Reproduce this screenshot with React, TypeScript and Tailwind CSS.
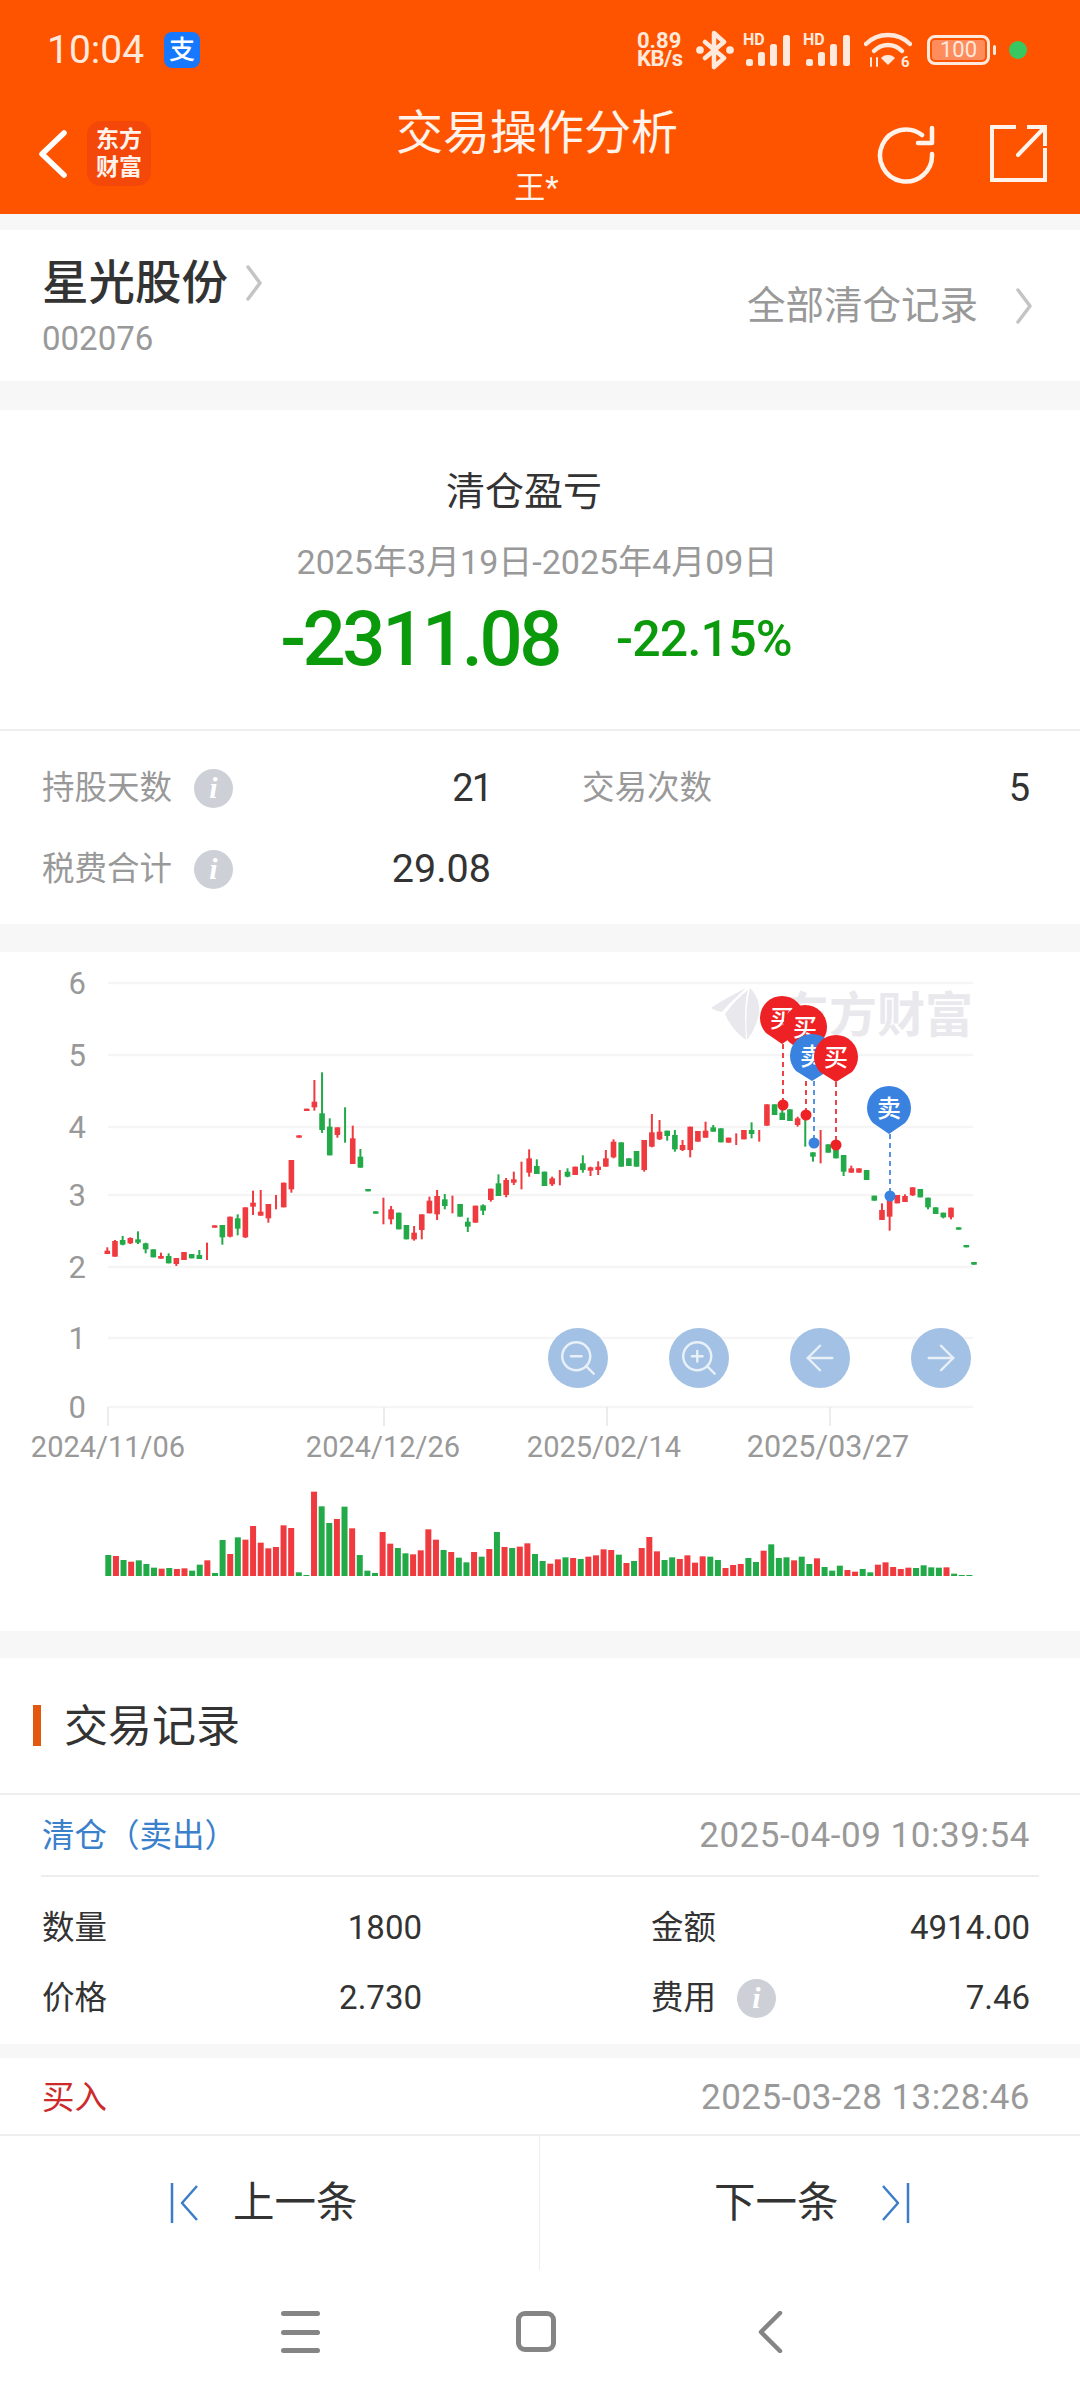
import { ArrowLeft, ArrowRight, ZoomIn, ZoomOut } from 'lucide-react';

type Candle = ['r' | 'g', number, number, number, number];

const RED = '#ef3a3f';
const GREEN = '#22a948';

// [colour, wick top, wick bottom, body top, body bottom], in thirds of a pixel
const firstCandles: Candle[] = [
  ['r', 262, 282, 272, 282],
  ['r', 240, 290, 243, 290],
  ['g', 228, 256, 240, 254],
  ['r', 232, 252, 234, 250],
  ['g', 214, 252, 238, 248],
  ['g', 248, 280, 250, 268],
  ['g', 268, 292, 268, 292],
  ['r', 278, 296, 288, 296],
  ['g', 280, 310, 288, 310],
  ['r', 294, 318, 294, 312],
  ['r', 276, 300, 276, 300],
  ['g', 282, 295, 282, 295],
  ['g', 270, 297, 285, 297],
  ['r', 248, 300, 0, 0],
  ['r', 196, 203, 196, 203],
  ['g', 195, 254, 195, 232],
  ['r', 170, 232, 170, 230],
  ['g', 163, 226, 175, 206],
  ['r', 142, 234, 142, 232],
  ['r', 92, 165, 128, 140],
  ['r', 90, 167, 155, 167],
  ['r', 132, 188, 132, 175],
  ['r', 105, 148, 0, 0],
  ['r', 68, 142, 68, 142],
];

const restCandles: Candle[] = [
  ['r', 630, 728, 630, 718],
  ['r', 556, 563, 556, 563],
  ['r', 476, 483, 476, 483],
  ['r', 390, 482, 455, 472],
  ['g', 367, 549, 490, 540],
  ['g', 505, 616, 530, 616],
  ['r', 532, 563, 532, 555],
  ['g', 472, 578, 0, 0],
  ['r', 527, 642, 565, 642],
  ['g', 597, 653, 620, 653],
  ['g', 717, 724, 717, 724],
  ['g', 784, 791, 784, 791],
  ['r', 743, 823, 0, 0],
  ['r', 768, 823, 778, 808],
  ['g', 788, 838, 788, 838],
  ['g', 825, 868, 825, 868],
  ['r', 828, 872, 848, 868],
  ['r', 793, 868, 793, 840],
  ['r', 740, 790, 752, 790],
  ['r', 720, 810, 738, 793],
  ['g', 732, 778, 748, 768],
  ['r', 737, 790, 0, 0],
  ['g', 762, 800, 762, 800],
  ['g', 803, 846, 815, 830],
  ['r', 767, 818, 767, 818],
  ['g', 763, 795, 766, 782],
  ['r', 716, 755, 716, 750],
  ['g', 673, 738, 700, 738],
  ['r', 684, 742, 690, 735],
  ['r', 665, 705, 688, 698],
  ['r', 635, 718, 0, 0],
  ['r', 598, 680, 625, 668],
  ['g', 628, 672, 648, 672],
  ['g', 665, 708, 665, 708],
  ['r', 680, 708, 685, 703],
  ['r', 660, 706, 0, 0],
  ['g', 655, 682, 665, 680],
  ['r', 650, 675, 650, 675],
  ['g', 616, 668, 640, 660],
  ['r', 650, 678, 652, 662],
  ['r', 634, 675, 650, 660],
  ['r', 600, 650, 625, 650],
  ['r', 568, 625, 575, 622],
  ['g', 577, 650, 577, 650],
  ['g', 625, 648, 625, 648],
  ['g', 603, 650, 603, 650],
  ['r', 570, 665, 570, 660],
  ['r', 492, 592, 547, 590],
  ['r', 510, 570, 545, 568],
  ['g', 542, 572, 542, 558],
  ['g', 540, 605, 555, 598],
  ['r', 570, 603, 585, 600],
  ['r', 530, 622, 530, 600],
  ['r', 543, 575, 543, 575],
  ['r', 515, 563, 542, 563],
  ['g', 525, 545, 532, 545],
  ['g', 535, 577, 535, 577],
  ['r', 563, 578, 563, 578],
  ['r', 550, 585, 0, 0],
  ['r', 540, 568, 540, 568],
  ['g', 517, 565, 540, 552],
  ['r', 540, 575, 0, 0],
  ['r', 463, 527, 463, 527],
  ['g', 463, 495, 463, 495],
  ['g', 475, 510, 488, 510],
  ['g', 478, 513, 478, 513],
  ['r', 500, 530, 505, 525],
  ['g', 495, 590, 0, 0],
  ['g', 607, 635, 607, 620],
  ['r', 540, 640, 0, 0],
  ['g', 583, 608, 583, 608],
  ['g', 598, 625, 598, 625],
  ['g', 615, 678, 615, 665],
  ['r', 647, 668, 655, 668],
  ['r', 655, 668, 655, 668],
  ['g', 660, 690, 660, 690],
  ['g', 737, 752, 737, 752],
  ['r', 760, 810, 780, 810],
  ['r', 750, 842, 750, 800],
  ['r', 735, 760, 735, 760],
  ['r', 733, 756, 738, 756],
  ['r', 712, 738, 712, 736],
  ['g', 717, 742, 717, 742],
  ['g', 743, 778, 743, 772],
  ['g', 772, 792, 772, 792],
  ['g', 788, 805, 788, 802],
  ['r', 773, 808, 773, 802],
  ['g', 832, 839, 832, 839],
  ['g', 885, 892, 885, 892],
  ['g', 936, 944, 936, 944],
];

const candles: Candle[] = [
  ...firstCandles.map(([c, a, b, d, e]): Candle => [c, a + 630, b + 630, d ? d + 630 : 0, e ? e + 630 : 0]),
  ...restCandles,
];

const volumeColors =
  'grgrgggrgr' + 'rggrggrgrr' + 'rrrrrggrgg' + 'rgrgggrrgg' + 'rrrrgrggrg' + 'rgrgrrggrr' + 'grgrrrrgrg' + 'rrrggrrrrg' + 'grrrggrggg' + 'rggrgggrrg' + 'grrrrrgggg' + 'rggg';

const volumeTops = [
  285, 288, 300, 305, 301, 312, 323, 326, 324, 327, 325, 332, 314, 301, 339, 240, 282, 232, 239, 198, 248, 265, 261, 196, 204, 337, 345, 95, 139, 189, 177, 140, 205, 285, 332, 339, 216, 251, 264, 280, 283, 271, 208, 239, 270, 276, 293, 307, 276, 290, 267, 216, 261, 264, 260, 250, 282, 303, 311, 298, 292, 294, 297, 290, 286, 268, 270, 284, 309, 303, 264, 231, 274, 300, 292, 297, 286, 308, 289, 290, 300, 324, 315, 312, 294, 306, 272, 253, 294, 292, 301, 290, 312, 295, 321, 332, 317, 330, 335, 327, 337, 314, 307, 321, 327, 323, 324, 316, 322, 323, 322, 341, 345, 345,
];

const grid: [string, number][] = [
  ['6', 31],
  ['5', 103],
  ['4', 175],
  ['3', 243],
  ['2', 315],
  ['1', 386],
  ['0', 455],
];

// label, tick position, label position, font size
const dates: [string, number, number, number][] = [
  ['2024/11/06', 108, 108, 29],
  ['2024/12/26', 384, 383, 29],
  ['2025/02/14', 607, 604, 29],
  ['2025/03/27', 830, 828, 30.5],
];

const pins: { x: number; y: number; tip: number; dot: number; dotX: number; label: string; color: string }[] = [
  { x: 782, y: 66, tip: 92, dot: 153, dotX: 783, label: '买', color: '#ee2225' },
  { x: 805, y: 75, tip: 102, dot: 163, dotX: 806, label: '买', color: '#ee2225' },
  { x: 812, y: 104, tip: 129, dot: 191, dotX: 814, label: '卖', color: '#3a82e0' },
  { x: 836, y: 105, tip: 130, dot: 193, dotX: 836, label: '买', color: '#ee2225' },
  { x: 889, y: 156, tip: 182, dot: 244, dotX: 890, label: '卖', color: '#3a82e0' },
];

function InfoDot() {
  return (
    <span className="flex h-[39px] w-[39px] shrink-0 items-center justify-center rounded-full bg-[#cdd1d7] font-['Liberation_Serif',serif] text-[30px] leading-none font-bold text-white italic">
      i
    </span>
  );
}

function SignalBars({ className }: { className: string }) {
  return (
    <svg className={className} width="50" height="34" viewBox="0 0 50 34" fill="#ffe9dc">
      <text x="0" y="12" fontSize="16" fontWeight="700">
        HD
      </text>
      <rect x="3" y="26" width="7" height="7" rx="2.5" />
      <rect x="15" y="19" width="7" height="14" rx="2.5" />
      <rect x="27" y="11" width="7" height="22" rx="2.5" />
      <rect x="40" y="2" width="7" height="31" rx="2.5" />
    </svg>
  );
}

function StatusBar() {
  return (
    <div className="flex h-[100px] items-center pr-[53px] pl-[47px] text-[#ffe9dc]">
      <span className="text-[39px] leading-none">10:04</span>
      <span className="ml-[20px] flex h-[36px] w-[36px] items-center justify-center rounded-[8px] bg-[#1677ff] text-[26px] leading-none font-medium text-white">
        支
      </span>
      <div className="ml-auto flex items-center">
        <div className="flex w-[50px] flex-col text-[22px] leading-[18px] font-bold">
          <span>0.89</span>
          <span className="tracking-[-0.5px]">KB/s</span>
        </div>
        <svg className="ml-[9px]" width="38" height="40" viewBox="0 0 38 40" fill="none" stroke="#ffe9dc" strokeWidth="4.5" strokeLinecap="round" strokeLinejoin="round">
          <path d="M9 12 28 28 18 37V3L28 12 9 28" />
          <circle cx="4" cy="20" r="1.6" fill="#ffe9dc" />
          <circle cx="34" cy="20" r="1.6" fill="#ffe9dc" />
        </svg>
        <SignalBars className="ml-[9px]" />
        <SignalBars className="ml-[10px]" />
        <svg className="ml-[11px]" width="48" height="36" viewBox="0 0 48 36" fill="none" stroke="#ffe9dc" strokeLinecap="round">
          <path d="M2 12C14 0 34 0 46 12" strokeWidth="4.5" />
          <path d="M10 19C18 11 30 11 38 19" strokeWidth="4.5" />
          <path d="M18 26C21 23 27 23 30 26L24 32Z" fill="#ffe9dc" strokeWidth="1.5" />
          <path d="M7 26V34M13 26V34" strokeWidth="2" />
          <text x="37" y="35" fontSize="15" fontWeight="700" fill="#ffe9dc" stroke="none">
            6
          </text>
        </svg>
        <div className="ml-[15px] flex items-center">
          <span className="flex h-[30px] w-[63px] items-center justify-center rounded-[8px] border-[3px] border-[#ffe9dc] p-[2px]">
            <span className="flex h-full w-full items-center justify-center rounded-[3px] bg-[#ff8c5c] text-[22px] leading-none">100</span>
          </span>
          <span className="ml-[3px] h-[10px] w-[3px] rounded-full bg-[#ffe9dc]" />
        </div>
        <span className="ml-[13px] h-[18px] w-[18px] rounded-full bg-[#39c860]" />
      </div>
    </div>
  );
}

function NavBar() {
  return (
    <div className="grid h-[114px] grid-cols-[1fr_auto_1fr] items-start">
      <div className="flex items-center pt-[21px] pl-[37px]">
        <svg width="32" height="50" viewBox="0 0 32 50" fill="none" stroke="#fff" strokeWidth="5.5" strokeLinecap="round" strokeLinejoin="round">
          <path d="M27 4 5 25l22 21" />
        </svg>
        <div className="ml-[18px] flex h-[65px] w-[64px] flex-col items-center justify-center rounded-[14px] bg-[#f4470a] text-[23px] leading-[28px] font-bold text-[#fff3ec]">
          <span>东方</span>
          <span>财富</span>
        </div>
      </div>
      <div className="flex flex-col items-center pt-[2px] pr-[6px] text-[#fff3ec]">
        <span className="text-[47px] leading-[62px]">交易操作分析</span>
        <span className="mt-[3px] pr-[1px] text-[31px] leading-[42px]">王*</span>
      </div>
      <div className="flex justify-end gap-[53px] pt-[24px] pr-[33px]">
        <svg width="60" height="60" viewBox="0 0 60 60" fill="none" stroke="#fff3ec" strokeWidth="4.5" strokeLinecap="round" strokeLinejoin="round">
          <path d="M46 11A26 26 0 1 0 56 30" />
          <path d="M56 4V19H42" />
        </svg>
        <svg width="58" height="60" viewBox="0 0 58 60" fill="none" stroke="#fff3ec" strokeWidth="4" strokeLinecap="square">
          <path d="M25 3H3V56H56V26" />
          <path d="M29 31 55 4" strokeLinecap="round" />
          <path d="M40 3H56V20" />
        </svg>
      </div>
    </div>
  );
}

function Chevron({ className }: { className: string }) {
  return (
    <svg className={className} width="18" height="38" viewBox="0 0 18 38" fill="none" stroke="#c4c4c4" strokeWidth="3.5" strokeLinecap="round" strokeLinejoin="round">
      <path d="M3 3 15 19 3 35" />
    </svg>
  );
}

function StockHeader() {
  return (
    <div className="flex h-[151px] items-start justify-between bg-white pr-[47px] pl-[42px]">
      <div>
        <div className="flex items-center pt-[28px]">
          <span className="text-[46.5px] leading-[50px] font-medium text-[#333]">星光股份</span>
          <Chevron className="ml-[17px]" />
        </div>
        <div className="mt-[12px] text-[33px] leading-[38px] text-[#999]">002076</div>
      </div>
      <div className="flex items-center pt-[52px]">
        <span className="text-[38.5px] leading-[48px] text-[#999]">全部清仓记录</span>
        <Chevron className="ml-[37px]" />
      </div>
    </div>
  );
}

function Summary() {
  return (
    <div className="bg-white">
      <div className="flex h-[321px] flex-col items-center border-b-2 border-[#eeeeee] pt-[57px]">
        <div className="pr-[32px] text-[39px] leading-[50px] text-[#333]">清仓盈亏</div>
        <div className="mt-[25px] pr-[6px] text-[34px] leading-[40px] text-[#999]">2025年3月19日-2025年4月09日</div>
        <div className="mt-[15px] flex items-center gap-[57px] pr-[8px] font-medium text-[#0b9a0b]">
          <span className="text-[76px] leading-[84px] tracking-[-3.4px]">-2311.08</span>
          <span className="text-[50px] leading-[60px] tracking-[-0.8px]">-22.15%</span>
        </div>
      </div>
      <div className="grid h-[193px] grid-cols-[449px_448px] content-start gap-x-[91px] gap-y-[41px] pt-[37px] pl-[42px]">
        <div className="flex h-[40px] items-center">
          <span className="text-[32.5px] text-[#999]">持股天数</span>
          <span className="ml-[22px]">
            <InfoDot />
          </span>
          <span className="ml-auto text-[38px] tracking-[-2px] text-[#333]">21</span>
        </div>
        <div className="flex h-[40px] items-center">
          <span className="text-[32.5px] text-[#999]">交易次数</span>
          <span className="ml-auto text-[38px] text-[#333]">5</span>
        </div>
        <div className="flex h-[40px] items-center">
          <span className="text-[32.5px] text-[#999]">税费合计</span>
          <span className="ml-[22px]">
            <InfoDot />
          </span>
          <span className="ml-auto text-[39.5px] text-[#333]">29.08</span>
        </div>
      </div>
    </div>
  );
}

function Chart() {
  const toY = (v: number) => v / 3 - 2;

  return (
    <div className="relative h-[679px] bg-white">
      <svg width="1080" height="508" className="block">
        {grid.map(([label, y]) => (
          <g key={label}>
            <line x1="108" x2="973" y1={y} y2={y} stroke="#f5f5f5" strokeWidth="2.5" />
            <text x="86" y={y + 11} textAnchor="end" fontSize="31" fill="#999">
              {label}
            </text>
          </g>
        ))}
        {dates.map(([label, tick, x, size]) => (
          <g key={label}>
            <line x1={tick} x2={tick} y1="455" y2="474" stroke="#e6e6e6" strokeWidth="1.5" />
            <text x={x} y="505" textAnchor="middle" fontSize={size} fill="#999">
              {label}
            </text>
          </g>
        ))}

        {/* watermark */}
        <g transform="translate(0 -952)" fill="#e9e9ed">
          <path d="M711 1008C722 1000 735 994 746 988 738 996 728 1004 722 1012 718 1011 714 1010 711 1008Z" />
          <path d="M725 1014C732 1004 740 996 748 990 744 1005 745 1022 746 1040 738 1034 730 1026 725 1014Z" />
          <path d="M750 988C758 996 761 1006 758 1018 755 1028 751 1035 747 1040 746 1022 746 1004 750 988Z" />
        </g>
        <text x="781" y="80" fontSize="48" fontWeight="700" fill="#e9e9ed">
          东方财富
        </text>

        {candles.map(([c, wickTop, wickBot, bodyTop, bodyBot], i) => {
          const x = 107.3 + 7.67 * i;
          const color = c === 'r' ? RED : GREEN;
          return (
            <g key={i} fill={color}>
              <rect x={x - 1} y={toY(wickTop)} width="2" height={(wickBot - wickTop) / 3} />
              {bodyBot > 0 && <rect x={x - 2.8} y={toY(bodyTop)} width="5.6" height={(bodyBot - bodyTop) / 3} />}
            </g>
          );
        })}

        {pins.map((p, i) => (
          <g key={i}>
            <line x1={p.dotX} x2={p.dotX} y1={p.tip} y2={p.dot} stroke={p.color} strokeWidth="2" strokeDasharray="5 4" opacity="0.85" />
            <circle cx={p.dotX} cy={p.dot} r="5.5" fill={p.color} />
            <path d={`M${p.x - 16} ${p.y + 15}A22 22 0 1 1 ${p.x + 16} ${p.y + 15}L${p.x} ${p.tip}Z`} fill={p.color} />
            <text x={p.x} y={p.y + 9} textAnchor="middle" fontSize="24" fontWeight="500" fill="#fff">
              {p.label}
            </text>
          </g>
        ))}
      </svg>

      <svg width="1080" height="130" className="block">
        {volumeTops.map((top, i) => (
          <rect
            key={i}
            x={105.3 + 7.62 * i}
            y={top / 3}
            width="6"
            height={(348 - top) / 3}
            fill={volumeColors[i] === 'r' ? RED : GREEN}
          />
        ))}
      </svg>

      <div className="absolute top-[376px] left-[548px] flex gap-[61px] text-[#e8f0f8]">
        <button className="flex h-[60px] w-[60px] items-center justify-center rounded-full bg-[#a3c1e4]">
          <ZoomOut size={42} strokeWidth={1.4} />
        </button>
        <button className="flex h-[60px] w-[60px] items-center justify-center rounded-full bg-[#a3c1e4]">
          <ZoomIn size={42} strokeWidth={1.4} />
        </button>
        <button className="flex h-[60px] w-[60px] items-center justify-center rounded-full bg-[#a3c1e4]">
          <ArrowLeft size={42} strokeWidth={1.4} />
        </button>
        <button className="flex h-[60px] w-[60px] items-center justify-center rounded-full bg-[#a3c1e4]">
          <ArrowRight size={42} strokeWidth={1.4} />
        </button>
      </div>
    </div>
  );
}

function TradeRecords() {
  return (
    <div className="bg-white">
      <div className="flex h-[137px] items-center border-b-2 border-[#eeeeee] pl-[33px]">
        <span className="h-[41px] w-[8px] bg-[#e2580f]" />
        <span className="ml-[23px] pt-[2px] text-[44px] text-[#333]">交易记录</span>
      </div>
      <div className="mx-[41px] flex h-[82px] items-center justify-between border-b-2 border-[#eeeeee] pt-[2px] pr-[9px] pl-[1px]">
        <span className="text-[32.5px] text-[#3a80cb]">清仓（卖出）</span>
        <span className="text-[35px] tracking-[0.55px] text-[#999]">2025-04-09 10:39:54</span>
      </div>
      <div className="grid h-[167px] grid-cols-[380px_379px] content-start gap-x-[229px] gap-y-[30px] pt-[31px] pl-[42px]">
        <div className="flex h-[40px] items-center justify-between text-[32.5px] text-[#333]">
          <span>数量</span>
          <span className="text-[33px]">1800</span>
        </div>
        <div className="flex h-[40px] items-center justify-between text-[32.5px] text-[#333]">
          <span>金额</span>
          <span className="text-[33px]">4914.00</span>
        </div>
        <div className="flex h-[40px] items-center justify-between text-[32.5px] text-[#333]">
          <span>价格</span>
          <span className="text-[33px]">2.730</span>
        </div>
        <div className="flex h-[40px] items-center text-[32.5px] text-[#333]">
          <span>费用</span>
          <span className="ml-[21px]">
            <InfoDot />
          </span>
          <span className="ml-auto text-[33px]">7.46</span>
        </div>
      </div>
    </div>
  );
}

function PagerIcon({ flip }: { flip?: boolean }) {
  return (
    <svg className={flip ? 'rotate-180' : ''} width="30" height="40" viewBox="0 0 30 40" fill="none" stroke="#3b7dc6" strokeLinejoin="round">
      <path d="M2 0V40" strokeWidth="2.5" />
      <path d="M27 3 12 20 27 37" strokeWidth="2.5" />
    </svg>
  );
}

function Pager() {
  return (
    <div className="grid h-[136px] grid-cols-2 border-t-2 border-[#eeeeee] bg-white text-[41.5px] text-[#333]">
      <div className="flex items-center border-r border-[#eeeeee] pl-[170px]">
        <PagerIcon />
        <span className="ml-[33px]">上一条</span>
      </div>
      <div className="flex items-center pl-[174px]">
        <span>下一条</span>
        <span className="ml-[41px]">
          <PagerIcon flip />
        </span>
      </div>
    </div>
  );
}

function SystemNav() {
  return (
    <div className="flex h-[130px] items-start bg-white pt-[41px] pl-[281px]">
      <div className="flex h-[42px] w-[39px] flex-col justify-between">
        <span className="h-[5px] rounded-full bg-[#858585]" />
        <span className="h-[5px] rounded-full bg-[#858585]" />
        <span className="h-[5px] rounded-full bg-[#858585]" />
      </div>
      <span className="ml-[196px] h-[41px] w-[40px] rounded-[9px] border-[5px] border-[#858585]" />
      <svg className="ml-[200px]" width="28" height="42" viewBox="0 0 28 42" fill="none" stroke="#858585" strokeWidth="4.5" strokeLinecap="round" strokeLinejoin="round">
        <path d="M24 2 5 21l19 19" />
      </svg>
    </div>
  );
}

export default function App() {
  return (
    <div className="flex h-[2400px] w-[1080px] flex-col overflow-hidden bg-white font-[Roboto,'Noto_Sans_CJK_SC',sans-serif]">
      <div className="bg-[#fe5400]">
        <StatusBar />
        <NavBar />
      </div>
      <div className="h-[16px] bg-[#f7f7f7]" />
      <StockHeader />
      <div className="h-[29px] bg-[#f7f7f7]" />
      <Summary />
      <div className="h-[28px] bg-[#f7f7f7]" />
      <Chart />
      <div className="h-[27px] bg-[#f7f7f7]" />
      <TradeRecords />
      <div className="h-[14px] bg-[#f7f7f7]" />
      <div className="flex h-[76px] items-center justify-between bg-white pt-[4px] pr-[50px] pl-[42px]">
        <span className="text-[32.5px] text-[#cc2b2b]">买入</span>
        <span className="text-[35px] tracking-[0.45px] text-[#999]">2025-03-28 13:28:46</span>
      </div>
      <Pager />
      <SystemNav />
    </div>
  );
}
